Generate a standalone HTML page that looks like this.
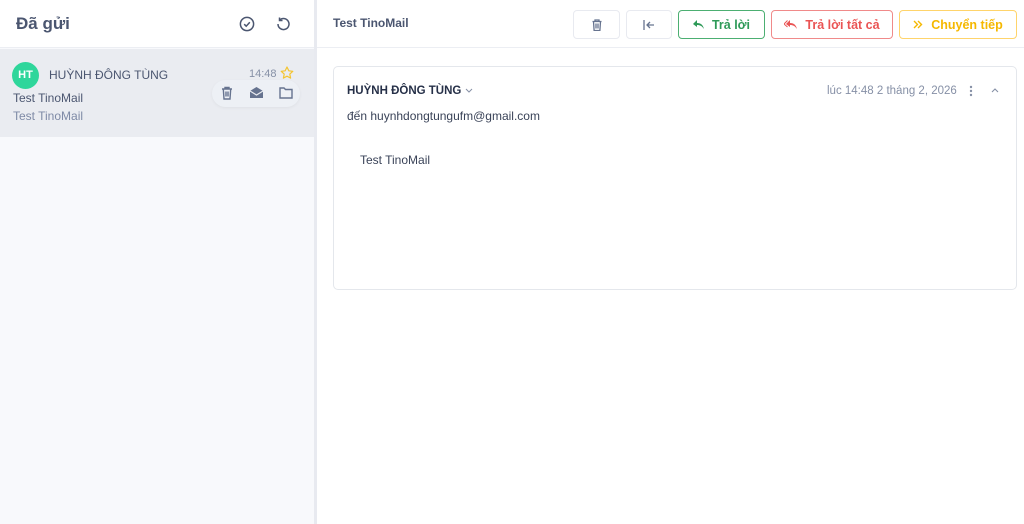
<!DOCTYPE html>
<html><head><meta charset="utf-8"><style>
*{box-sizing:border-box;margin:0;padding:0}
body{width:1024px;height:524px;overflow:hidden;font-family:"Liberation Sans",sans-serif;background:#fff;position:relative}
.left{position:absolute;left:0;top:0;width:314px;height:524px;background:#f8f9fc}
.lh{height:48px;background:#fff;border-bottom:1px solid #eceef3;position:relative}
.lh h1{position:absolute;left:16px;top:14px;font-size:17px;font-weight:bold;color:#4b5670}
.item{position:absolute;top:49px;left:0;width:314px;height:88px;background:#eaecf1}
.av{position:absolute;left:12px;top:13px;width:27px;height:27px;border-radius:50%;background:#2fd69b;color:#fff;font-size:11px;font-weight:bold;text-align:center;line-height:27px}
.divider{position:absolute;left:314px;top:0;width:3px;height:524px;background:#e8eaf0}
.right{position:absolute;left:317px;top:0;right:0;height:524px}
.rh{height:48px;border-bottom:1px solid #eceef3;position:relative}
.btn{position:absolute;top:10px;height:29px;border:1px solid #e8eaf0;border-radius:4px;font-size:12.5px;font-weight:bold;display:flex;align-items:center;justify-content:center;gap:8px}
.card{position:absolute;left:16px;top:66px;width:684px;height:224px;border:1px solid #e4e7ec;border-radius:5px}
svg{display:block}
</style></head><body>
<div class="left">
<div class="lh"><h1>Đã gửi</h1>
<svg style="position:absolute;left:239px;top:16px" width="16" height="16" viewBox="0 0 16 16" fill="none" stroke="#4b5670" stroke-width="1.5"><circle cx="8" cy="8" r="6.6"/><path d="M5.2 8.2l2 2 3.6-4"/></svg>
<svg style="position:absolute;left:275px;top:16px" width="16" height="16" viewBox="0 0 16 16" fill="none" stroke="#4b5670" stroke-width="1.5"><path d="M3 8a5.5 5.5 0 1 0 1.8-4"/><path d="M4.5 1.5v3h3"/></svg>
</div>
<div class="item">
<div class="av">HT</div>
<div style="position:absolute;left:49px;top:19px;font-size:12px;color:#4b5670">HUỲNH ĐÔNG TÙNG</div>
<div style="position:absolute;left:249px;top:19px;font-size:11px;color:#8690a6">14:48</div>
<svg style="position:absolute;left:280px;top:17px" width="14" height="14" viewBox="0 0 14 14" fill="none" stroke="#f4c430" stroke-width="1.2" stroke-linejoin="round"><path d="M7 1l1.8 3.8 4 .5-3 2.8.8 4L7 10.2 3.4 12.1l.8-4-3-2.8 4-.5z"/></svg>
<div style="position:absolute;left:13px;top:42px;font-size:12px;color:#4b5670">Test TinoMail</div>
<div style="position:absolute;left:13px;top:60px;font-size:12px;color:#7e8aa6">Test TinoMail</div>
<div style="position:absolute;left:212px;top:31px;width:88px;height:27px;border-radius:14px;background:#edf0f5;box-shadow:0 1px 3px rgba(0,0,0,.05)"></div>
<svg style="position:absolute;left:221px;top:37px" width="12" height="14" viewBox="0 0 12 14" fill="none" stroke="#66738f" stroke-width="1.4"><path d="M1 3h10M4 3V1.5h4V3M2.3 3l.7 10h6l.7-10M5 5.5v5M7 5.5v5"/></svg>
<svg style="position:absolute;left:249px;top:37px" width="15" height="13" viewBox="0 0 15 13"><path d="M1 5l6.5-4 6.5 4v7H1z" fill="#66738f"/><path d="M1 5l6.5 4 6.5-4" fill="none" stroke="#eaecf1" stroke-width="1.2"/></svg>
<svg style="position:absolute;left:279px;top:38px" width="14" height="12" viewBox="0 0 14 12" fill="none" stroke="#66738f" stroke-width="1.4"><path d="M1 1h4l1.5 1.5H13V11H1z"/></svg>
</div>
</div>
<div class="divider"></div>
<div class="right">
<div class="rh">
<div style="position:absolute;left:16px;top:16px;font-size:12px;font-weight:bold;color:#4b5670">Test TinoMail</div>
<div class="btn" style="left:256px;width:47px"><svg width="10" height="12" viewBox="0 0 10 12" fill="none" stroke="#66738f" stroke-width="1.3"><path d="M0.5 2.5h9M3 2.5V1h4v1.5M1.5 2.5l.6 9h5.8l.6-9M4 4.5v5M6 4.5v5"/></svg></div>
<div class="btn" style="left:309px;width:46px"><svg width="12" height="10" viewBox="0 0 12 10" fill="none" stroke="#66738f" stroke-width="1.3"><path d="M1 0v10M11 5H4M7 2L4 5l3 3"/></svg></div>
<div class="btn" style="left:361px;width:87px;border-color:#4caf72;color:#2e9a58"><svg width="11" height="9" viewBox="0 0 11 9"><path d="M4 0L0 4l4 3V5c3 0 5 1 7 4-1-4-3-6-7-6z" fill="#2e9a58"/></svg>Trả lời</div>
<div class="btn" style="left:454px;width:122px;border-color:#f08a8a;color:#ea5454"><svg width="13" height="9" viewBox="0 0 13 9"><path d="M6 0L2 4l4 3V5c3 0 5 1 7 4-1-4-3-6-7-6z" fill="#ea5454"/><path d="M3.5 0.5L0 4l3.5 3" fill="none" stroke="#ea5454"/></svg>Trả lời tất cả</div>
<div class="btn" style="left:582px;width:118px;border-color:#ffd46b;color:#f5b800"><svg width="10" height="9" viewBox="0 0 10 9" fill="none" stroke="#f5b800" stroke-width="1.4"><path d="M1 1l3.5 3.5L1 8M5 1l3.5 3.5L5 8"/></svg>Chuyển tiếp</div>
</div>
<div class="card">
<div style="position:absolute;left:13px;top:18px;font-size:11.5px;font-weight:bold;color:#263048">HUỲNH ĐÔNG TÙNG</div>
<svg style="position:absolute;left:131px;top:21px" width="8" height="5" viewBox="0 0 8 5" fill="none" stroke="#8690a6" stroke-width="1"><path d="M1 1l3 3 3-3"/></svg>
<div style="position:absolute;left:493px;top:18px;font-size:11.5px;color:#8690a6">lúc 14:48 2 tháng 2, 2026</div>
<svg style="position:absolute;left:635px;top:18px" width="4" height="12" viewBox="0 0 4 12" fill="#8690a6"><circle cx="2" cy="2" r="1.2"/><circle cx="2" cy="6" r="1.2"/><circle cx="2" cy="10" r="1.2"/></svg>
<svg style="position:absolute;left:657px;top:21px" width="8" height="5" viewBox="0 0 8 5" fill="none" stroke="#8690a6" stroke-width="1.1"><path d="M1 4l3-3 3 3"/></svg>
<div style="position:absolute;left:13px;top:42px;font-size:12px;color:#3a4358">đến huynhdongtungufm@gmail.com</div>
<div style="position:absolute;left:26px;top:86px;font-size:12px;color:#3a4358">Test TinoMail</div>
</div>
</div>
</body></html>
